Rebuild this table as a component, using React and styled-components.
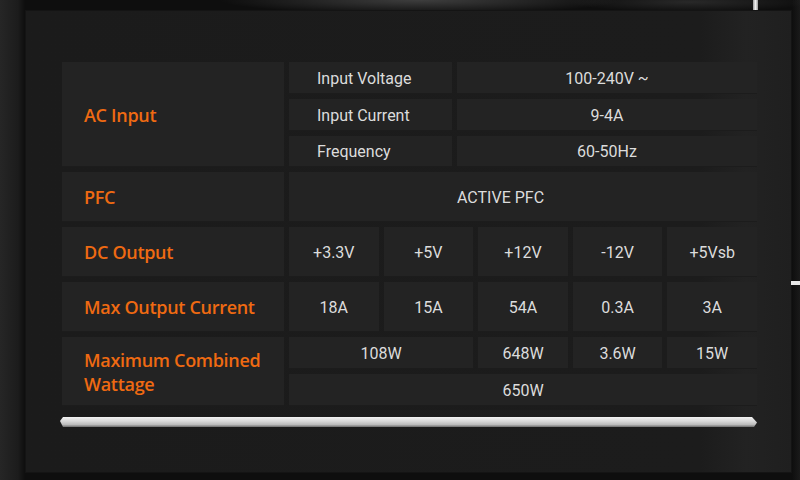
import React from "react";
import styled, { createGlobalStyle } from "styled-components";

const Global = createGlobalStyle`
  html, body { margin: 0; padding: 0; background: #0b0b0b; }
  body { width: 800px; height: 480px; overflow: hidden; }
`;

const Page = styled.div`
  position: relative;
  width: 800px;
  height: 480px;
  box-sizing: border-box;
  padding: 10px 8px 7px 25px;
  display: flex;
  background:
    radial-gradient(ellipse 200px 14px at 420px 0px, rgba(120,120,120,0.45), transparent 100%),
    radial-gradient(ellipse 120px 10px at 690px 2px, rgba(90,90,90,0.35), transparent 100%),
    linear-gradient(90deg, #262626 0px, #1c1c1c 18px, #0e0e0e 25px, #0e0e0e 792px, #1a1a1a 800px);
`;

const Notch = styled.span`
  position: absolute;
  background: linear-gradient(90deg, #9a9a9a, #f0f0f0, #9a9a9a);
  ${(p) => p.$css}
`;

const Panel = styled.div`
  flex: 1;
  box-sizing: border-box;
  padding: 52px 35px 0 37px;
  display: flex;
  flex-direction: column;
  background: linear-gradient(90deg, #1b1b1b 0%, #1c1c1c 88%, #222222 94%, #1f1f1f 100%);
  box-shadow: inset 0 0 0 1px #141414;
`;

const Table = styled.div`
  display: grid;
  width: 695px;
  grid-template-columns: 222px repeat(5, 1fr);
  grid-template-rows: 32px 32px 31px 50px 50px 50px 32px 32px;
  gap: 5px;
  font-family: Roboto, "Liberation Sans", sans-serif;
`;

const Cell = styled.div`
  background: #232323;
  display: flex;
  align-items: center;
  justify-content: center;
  color: #dcdcdc;
  font-size: 16px;
  box-shadow: inset 0 -1px 0 rgba(0,0,0,0.2);
`;

const Label = styled(Cell)`
  grid-column: 1;
  grid-row: ${(p) => p.$rows};
  justify-content: flex-start;
  padding-left: 22px;
  color: #ef6a12;
  font-family: "Open Sans", "Noto Sans", sans-serif;
  font-weight: 600;
  font-size: 18px;
  line-height: 24px;
  letter-spacing: -0.3px;
`;

const SubRow = styled.div`
  grid-column: 2 / -1;
  display: grid;
  grid-template-columns: 163px 1fr;
  gap: 5px;
`;

const KeyCell = styled(Cell)`
  justify-content: flex-start;
  padding-left: 28px;
`;

const Value = styled(Cell)`
  grid-column: ${(p) => p.$col || "auto"};
`;

const WideValue = styled(Value)`
  justify-content: flex-start;
  padding-left: 168px;
`;

const Bar = styled.div`
  width: 697px;
  height: 10px;
  margin: 11px 0 0 -2px;
  background: linear-gradient(180deg, #f2f2f2 0%, #d6d6d6 45%, #bcbcbc 75%, #6e6e6e 100%);
  clip-path: polygon(3px 0, calc(100% - 5px) 0, 100% 55%, calc(100% - 3px) 100%, 3px 100%, 0 40%);
`;

const acRows = [
  ["Input Voltage", "100-240V ~"],
  ["Input Current", "9-4A"],
  ["Frequency", "60-50Hz"],
];
const dc = ["+3.3V", "+5V", "+12V", "-12V", "+5Vsb"];
const amps = ["18A", "15A", "54A", "0.3A", "3A"];

export default function App() {
  return (
    <Page>
      <Global />
      <Notch $css="left: 753px; top: 0; width: 5px; height: 10px;" />
      <Notch $css="left: 791px; top: 281px; width: 9px; height: 4px; background: #e8e8e8;" />
      <Panel>
        <Table>
          <Label $rows="1 / 4">AC Input</Label>
          {acRows.map(([k, v]) => (
            <SubRow key={k}>
              <KeyCell>{k}</KeyCell>
              <Cell>{v}</Cell>
            </SubRow>
          ))}
          <Label $rows="4">PFC</Label>
          <WideValue $col="2 / -1">ACTIVE PFC</WideValue>
          <Label $rows="5">DC Output</Label>
          {dc.map((d) => (
            <Value key={d}>{d}</Value>
          ))}
          <Label $rows="6">Max Output Current</Label>
          {amps.map((a) => (
            <Value key={a}>{a}</Value>
          ))}
          <Label $rows="7 / 9">
            Maximum Combined
            <br />
            Wattage
          </Label>
          <Value $col="2 / 4">108W</Value>
          <Value>648W</Value>
          <Value>3.6W</Value>
          <Value>15W</Value>
          <Value $col="2 / -1">650W</Value>
        </Table>
        <Bar />
      </Panel>
    </Page>
  );
}
